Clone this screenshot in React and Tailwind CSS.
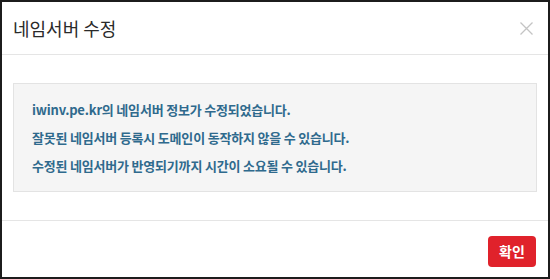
import React from 'react';

const lines = [
  'iwinv.pe.kr의 네임서버 정보가 수정되었습니다.',
  '잘못된 네임서버 등록시 도메인이 동작하지 않을 수 있습니다.',
  '수정된 네임서버가 반영되기까지 시간이 소요될 수 있습니다.',
];

export default function App() {
  return (
    <div
      className="w-[550px] h-[279px] border-2 border-[#1c1c1c] bg-white flex flex-col"
      style={{ fontFamily: '"Noto Sans CJK KR", "Noto Sans", sans-serif' }}
    >
      {/* header */}
      <div className="h-[53px] flex items-center justify-between pl-[11px] pr-[15px] border-b border-[#e5e5e5] shrink-0">
        <h1 className="text-[18px] text-[#2a2a2a] font-normal">네임서버 수정</h1>
        <button className="w-[13px] h-[13px] flex items-center justify-center">
          <svg width="13" height="13" viewBox="0 0 13 13" fill="none" stroke="#c4c4c4" strokeWidth="1.3">
            <path d="M0.5 0.5 L12.5 12.5 M12.5 0.5 L0.5 12.5" />
          </svg>
        </button>
      </div>

      {/* body */}
      <div className="px-[11px] pt-[28px] pb-[28px] border-b border-[#e5e5e5] shrink-0">
        <div className="border border-[#e3e3e3] bg-[#f5f5f5] pl-[18px] pt-[12px] pb-[11px]">
          {lines.map((t) => (
            <p key={t} className="leading-[28px] text-[13px] font-bold text-[#2f6a8d] tracking-[-0.2px]">
              {t}
            </p>
          ))}
        </div>
      </div>

      {/* footer */}
      <div className="flex-1 flex justify-end items-start pt-[15px] pr-[12px]">
        <button className="w-[48px] h-[31px] rounded-[4px] bg-[#e0222b] text-white text-[14px] font-bold">
          확인
        </button>
      </div>
    </div>
  );
}
